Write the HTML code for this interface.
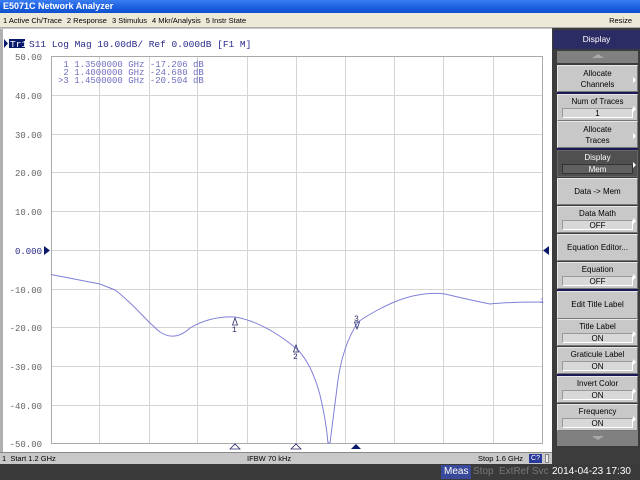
<!DOCTYPE html>
<html><head><style>
*{margin:0;padding:0;box-sizing:border-box}
body{width:640px;height:480px;overflow:hidden;background:#c8c8c8;font-family:"Liberation Sans",sans-serif;position:relative}
.title{position:absolute;left:0;top:0;width:640px;height:13px;background:linear-gradient(#3a7cf0,#1a5ee0 60%,#0e50cc);color:#fff;font-size:9px;font-weight:bold;padding-left:3px;line-height:13px}
.menu{position:absolute;left:0;top:13px;width:640px;height:15px;background:#ece9d8;font-size:7.5px;line-height:15px;color:#000;padding-left:3px;border-bottom:1px solid #aaa}
.menu span{margin-right:5px}
.rp{position:absolute;left:552px;top:28px;width:88px;height:436px;background:#3c3c3c}
.btn{position:absolute;left:5px;width:81px;background:#c8c8c8;border:1px solid #e8e8e8;border-right-color:#777;border-bottom-color:#777;font-size:8px;text-align:center;color:#000;line-height:11px}
.btn .v{display:block;margin:1px 4px 0 4px;height:10px;line-height:10px;background:#d8d8d8;border:1px solid #999;border-right-color:#fff;border-bottom-color:#fff}
.btn:after{content:"";position:absolute;right:1px;top:45%;border-left:3px solid #fff;border-top:3px solid transparent;border-bottom:3px solid transparent}
.nar:after{display:none}
.sep{position:absolute;left:5px;width:81px;height:2px;background:#1a1a5a}
.status{position:absolute;left:0;top:452px;width:552px;height:12px;background:#c8c8c8;font-size:7.5px;line-height:12px;color:#000;border-top:1px solid #888}
.bottom{position:absolute;left:0;top:464px;width:640px;height:16px;background:#3a3a3a;font-size:10px;line-height:16px}
</style></head><body>
<div class="title">E5071C Network Analyzer</div>
<div class="menu"><span>1 Active Ch/Trace</span><span>2 Response</span><span>3 Stimulus</span><span>4 Mkr/Analysis</span><span>5 Instr State</span><span style="position:absolute;right:3px">Resize</span></div>
<div style="position:absolute;left:0;top:29px;width:552px;height:423px;background:#fff;border-left:3px solid #b0b0b0"></div>
<svg style="position:absolute;left:0;top:0" width="552" height="452" font-family="Liberation Mono,monospace">
<rect x="9" y="39" width="16" height="9" fill="#0a1a6a"/>
<text x="10" y="47" font-size="9.5" fill="#fff">Tr1</text>
<text x="29" y="47" font-size="9.5" fill="#2a2a8a">S11 Log Mag 10.00dB/ Ref 0.000dB [F1 M]</text>
<path d="M4 39 L8 43.5 L4 48Z" fill="#0a1a6a"/>
<g stroke="#d4d4d4" stroke-width="1">
<path d="M51 56.5H542M51 95.5H542M51 134.5H542M51 172.5H542M51 211.5H542M51 250.5H542M51 289.5H542M51 327.5H542M51 366.5H542M51 405.5H542"/>
<path d="M99.5 56V443M149.5 56V443M197.5 56V443M247.5 56V443M296.5 56V443M345.5 56V443M394.5 56V443M443.5 56V443M493.5 56V443"/>
</g>
<rect x="51.5" y="56.5" width="491" height="387" fill="none" stroke="#aaa"/>
<g font-size="9" fill="#666" text-anchor="end">
<text x="42" y="60">50.00</text><text x="42" y="99">40.00</text><text x="42" y="138">30.00</text><text x="42" y="176">20.00</text><text x="42" y="215">10.00</text><text x="42" y="254" fill="#2a2a8a">0.000</text><text x="42" y="293">-10.00</text><text x="42" y="331">-20.00</text><text x="42" y="370">-30.00</text><text x="42" y="409">-40.00</text><text x="42" y="447">-50.00</text>
</g>
<g font-size="9" fill="#7070c0"><text x="58" y="67">&#160;1  1.3500000 GHz -17.206 dB</text><text x="58" y="75">&#160;2  1.4000000 GHz -24.680 dB</text><text x="58" y="83">&gt;3  1.4500000 GHz -20.504 dB</text></g>
<path d="M51 274.5L100 284L115 290C135 305 145 320 160 332Q175 342 190 328Q210 316 235 317Q265 322 298 350Q312 365 320 395Q326 420 328 443L330 443Q333 420 338 380Q343 345 358 322Q372 312 392 303Q420 291 445 294Q470 300 490 304Q510 302 542 302" fill="none" stroke="#8080d8" stroke-width="1"/>
<text x="540" y="303" font-size="7" fill="#8080d8">1</text>
<g fill="none" stroke="#2a2a6a" stroke-width="0.8">
<path d="M235 318l-2.5 7h5z"/><path d="M296 345l-2.5 7h5z"/><path d="M357 329l-2.5-7h5z"/>
<path d="M230 449l5-5 5 5z M291 449l5-5 5 5z"/></g>
<g font-size="8" fill="#2a2a6a"><text x="232" y="332">1</text><text x="293" y="359">2</text><text x="354" y="321">3</text></g>
<path d="M351 449l5-5 5 5z" fill="#0a1a6a"/>
<path d="M44 246l6 4.5-6 4.5z M549 246l-6 4.5 6 4.5z" fill="#0a1a6a"/>
</svg>
<div class="status"><span style="position:absolute;left:2px">1&nbsp; Start 1.2 GHz</span><span style="position:absolute;left:247px">IFBW 70 kHz</span><span style="position:absolute;left:478px">Stop 1.6 GHz</span><span style="position:absolute;left:529px;top:1px;width:13px;height:9px;background:#2a3a9a;color:#fff;font-size:7px;line-height:9px;text-align:center">C?</span><span style="position:absolute;left:545px;top:1px;width:4px;height:9px;background:#eee;border:1px solid #888"></span></div>
<div class="rp">
<div style="position:absolute;left:1px;top:2px;width:87px;height:19px;background:#2c2c64;color:#fff;font-size:8.5px;text-align:center;line-height:19px">Display</div>
<div style="position:absolute;left:5px;top:23px;width:81px;height:12px;background:#808080"><div style="margin:3px auto;width:0;border-bottom:4px solid #aaa;border-left:6px solid transparent;border-right:6px solid transparent"></div></div>
<div class="btn" style="top:37px;height:27px;padding-top:2px">Allocate<br>Channels</div>
<div class="sep" style="top:64px"></div>
<div class="btn" style="top:66px;height:27px;padding-top:1px">Num of Traces<span class="v">1</span></div>
<div class="btn" style="top:93px;height:27px;padding-top:2px">Allocate<br>Traces</div>
<div class="sep" style="top:120px"></div>
<div class="btn" style="top:122px;height:27px;padding-top:1px;background:#505050;color:#fff;border-color:#666">Display<span class="v" style="background:#606060;color:#fff;border-color:#333">Mem</span></div>
<div class="btn nar" style="top:150px;height:27px;line-height:25px">Data -&gt; Mem</div>
<div class="btn" style="top:178px;height:27px;padding-top:1px">Data Math<span class="v">OFF</span></div>
<div class="btn nar" style="top:206px;height:27px;line-height:25px">Equation Editor...</div>
<div class="btn" style="top:234px;height:27px;padding-top:1px">Equation<span class="v">OFF</span></div>
<div class="sep" style="top:261px"></div>
<div class="btn nar" style="top:263px;height:28px;line-height:26px">Edit Title Label</div>
<div class="btn" style="top:291px;height:27px;padding-top:1px">Title Label<span class="v">ON</span></div>
<div class="btn" style="top:319px;height:27px;padding-top:1px">Graticule Label<span class="v">ON</span></div>
<div class="sep" style="top:346px"></div>
<div class="btn" style="top:348px;height:27px;padding-top:1px">Invert Color<span class="v">ON</span></div>
<div class="btn" style="top:376px;height:27px;padding-top:1px">Frequency<span class="v">ON</span></div>
<div style="position:absolute;left:5px;top:403px;width:81px;height:15px;background:#808080"><div style="margin:5px auto;width:0;border-top:4px solid #aaa;border-left:6px solid transparent;border-right:6px solid transparent"></div></div>
</div>
<div class="bottom">
<span style="position:absolute;left:441px;top:1px;height:14px;line-height:14px;padding:0 3px;background:#3a4a9a;color:#fff">Meas</span>
<span style="position:absolute;left:473px;color:#777">Stop</span>
<span style="position:absolute;left:499px;color:#777">ExtRef</span>
<span style="position:absolute;left:532px;color:#777">Svc</span>
<span style="position:absolute;left:552px;color:#fff">2014-04-23 17:30</span>
</div>
</body></html>
